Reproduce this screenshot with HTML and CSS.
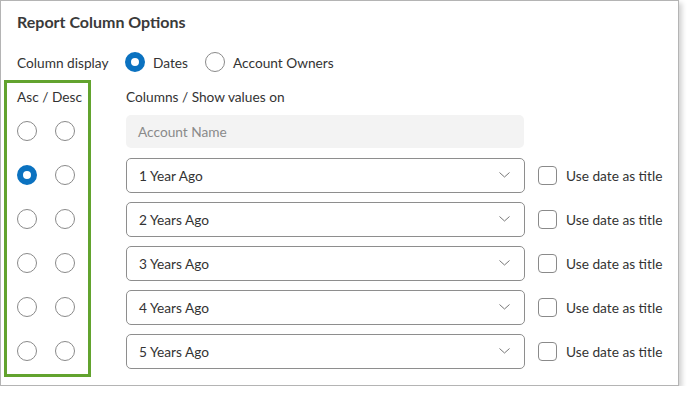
FILE: index.html
```html
<!DOCTYPE html>
<html lang="en">
<head>
    <meta charset="UTF-8">
    <title>Report Column Options</title>
    <link rel="stylesheet" href="styles.css">
</head>
<body>
    <div class="panel">
        <div class="title">Report Column Options</div>

        <div class="display-row">
            <span class="display-label">Column display</span>
            <label class="opt"><span class="radio checked"></span>Dates</label>
            <label class="opt"><span class="radio"></span>Account Owners</label>
        </div>

        <div class="main">
            <div class="sort">
                <div class="head">Asc / Desc</div>
                <div class="sort-row"><span class="radio"></span><span class="radio"></span></div>
                <div class="sort-row"><span class="radio checked"></span><span class="radio"></span></div>
                <div class="sort-row"><span class="radio"></span><span class="radio"></span></div>
                <div class="sort-row"><span class="radio"></span><span class="radio"></span></div>
                <div class="sort-row"><span class="radio"></span><span class="radio"></span></div>
                <div class="sort-row"><span class="radio"></span><span class="radio"></span></div>
            </div>

            <div class="columns">
                <div class="head">Columns / Show values on</div>
                <div class="col-row">
                    <div class="fixed">Account Name</div>
                </div>
                <div class="col-row">
                    <div class="select">1 Year Ago<svg class="chev" width="11" height="6" viewBox="0 0 11 6"><path d="M0.5 0.5 L5.5 5 L10.5 0.5" fill="none" stroke="#777" stroke-width="1"/></svg></div>
                    <label class="check"><span class="box"></span>Use date as title</label>
                </div>
                <div class="col-row">
                    <div class="select">2 Years Ago<svg class="chev" width="11" height="6" viewBox="0 0 11 6"><path d="M0.5 0.5 L5.5 5 L10.5 0.5" fill="none" stroke="#777" stroke-width="1"/></svg></div>
                    <label class="check"><span class="box"></span>Use date as title</label>
                </div>
                <div class="col-row">
                    <div class="select">3 Years Ago<svg class="chev" width="11" height="6" viewBox="0 0 11 6"><path d="M0.5 0.5 L5.5 5 L10.5 0.5" fill="none" stroke="#777" stroke-width="1"/></svg></div>
                    <label class="check"><span class="box"></span>Use date as title</label>
                </div>
                <div class="col-row">
                    <div class="select">4 Years Ago<svg class="chev" width="11" height="6" viewBox="0 0 11 6"><path d="M0.5 0.5 L5.5 5 L10.5 0.5" fill="none" stroke="#777" stroke-width="1"/></svg></div>
                    <label class="check"><span class="box"></span>Use date as title</label>
                </div>
                <div class="col-row">
                    <div class="select">5 Years Ago<svg class="chev" width="11" height="6" viewBox="0 0 11 6"><path d="M0.5 0.5 L5.5 5 L10.5 0.5" fill="none" stroke="#777" stroke-width="1"/></svg></div>
                    <label class="check"><span class="box"></span>Use date as title</label>
                </div>
            </div>
        </div>
    </div>
</body>
</html>
```

FILE: styles.css
```css
body {
    margin: 0;
    background: #fff;
    font-family: Lato, "Open Sans", sans-serif;
    font-size: 13.7px;
    color: #333;
}

.panel {
    box-sizing: border-box;
    width: 679px;
    height: 386px;
    border: 1px solid #b4b4b4;
    box-shadow: 3px 3px 5px rgba(0, 0, 0, 0.18);
    padding-top: 11px;
}

.title {
    padding-left: 16px;
    font-size: 16px;
    font-weight: bold;
    line-height: 20px;
    color: #3a3a3a;
}

.display-row {
    display: flex;
    align-items: center;
    height: 22px;
    margin-top: 19px;
    padding-left: 16px;
}

.display-label {
    flex: 0 0 108px;
}

.opt {
    display: flex;
    align-items: center;
    gap: 8px;
    margin-right: 17px;
}

.radio {
    box-sizing: border-box;
    display: inline-block;
    width: 20px;
    height: 20px;
    border: 1px solid #8a8a8a;
    border-radius: 50%;
    background: #fff;
}

.radio.checked {
    border: 6px solid #0b72c0;
}

.main {
    display: flex;
    align-items: flex-start;
    margin-top: 7px;
}

.head {
    height: 20px;
    line-height: 20px;
    padding-top: 4px;
    margin-bottom: 7px;
}

.sort {
    box-sizing: content-box;
    width: 71px;
    height: 291px;
    margin-left: 3px;
    padding-left: 10px;
    border: 3px solid #62a32e;
}

.sort-row {
    display: flex;
    align-items: center;
    gap: 18px;
    height: 34px;
    margin-bottom: 10px;
}

.columns {
    margin-left: 35px;
    padding-top: 3px;
}

.col-row {
    display: flex;
    align-items: center;
    height: 34px;
    margin-bottom: 10px;
}

.fixed {
    box-sizing: border-box;
    width: 398px;
    height: 33px;
    line-height: 33px;
    padding-left: 12px;
    background: #f3f3f3;
    border-radius: 5px;
    color: #8a8a8a;
}

.select {
    box-sizing: border-box;
    display: flex;
    align-items: center;
    justify-content: space-between;
    width: 399px;
    height: 35px;
    padding: 0 14px 0 12px;
    border: 1px solid #8e8e8e;
    border-radius: 5px;
}

.check {
    display: flex;
    align-items: center;
    gap: 9px;
    margin-left: 13px;
}

.box {
    box-sizing: border-box;
    width: 19px;
    height: 19px;
    border: 1px solid #8a8a8a;
    border-radius: 4px;
}
```
